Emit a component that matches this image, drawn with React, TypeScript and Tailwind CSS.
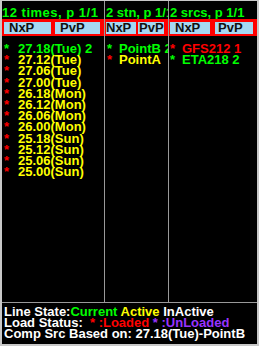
const tone = {
  g: 'text-[#00ff00]',
  y: 'text-[#ffff00]',
  r: 'text-[#ff0000]',
}

type Tone = keyof typeof tone
type Row = { star: Tone; color: Tone; text: string }

const times: Row[] = [
  { star: 'g', color: 'g', text: '27.18(Tue) 2' },
  ...['27.12(Tue)', '27.06(Tue)', '27.00(Tue)', '26.18(Mon)', '26.12(Mon)', '26.06(Mon)', '26.00(Mon)', '25.18(Sun)', '25.12(Sun)', '25.06(Sun)', '25.00(Sun)'].map(
    (text): Row => ({ star: 'r', color: 'y', text })
  ),
]

const stations: Row[] = [
  { star: 'g', color: 'g', text: 'PointB 2' },
  { star: 'r', color: 'y', text: 'PointA' },
]

const sources: Row[] = [
  { star: 'r', color: 'r', text: 'GFS212 1' },
  { star: 'g', color: 'g', text: 'ETA218 2' },
]

function Btn({ label, className }: { label: string; className: string }) {
  return (
    <div className={`h-[12px] bg-[#a6d8f2] text-[#111] leading-[12px] whitespace-nowrap overflow-hidden ${className}`}>
      {label}
    </div>
  )
}

type ColumnProps = {
  title: string
  titleClass: string
  className: string
  bandClass: string
  nxClass: string
  pvClass: string
  starClass: string
  rows: Row[]
}

function Column({ title, titleClass, className, bandClass, nxClass, pvClass, starClass, rows }: ColumnProps) {
  return (
    <div className={`flex flex-col overflow-hidden ${className}`}>
      <div className={`h-[18px] pt-[5px] leading-[13px] whitespace-nowrap text-[#00ff00] ${titleClass}`}>{title}</div>
      <div className={`flex h-[17px] bg-[#ff0000] pt-[3px] ${bandClass}`}>
        <Btn label="NxP" className={nxClass} />
        <Btn label="PvP" className={pvClass} />
      </div>
      <div className="pt-[7px] leading-[11.2px]">
        {rows.map((r) => (
          <div key={r.text} className="flex whitespace-nowrap">
            <span className={`shrink-0 ${starClass} ${tone[r.star]}`}>*</span>
            <span className={tone[r.color]}>{r.text}</span>
          </div>
        ))}
      </div>
    </div>
  )
}

export default function App() {
  return (
    <div className="w-[259px] h-[346px] bg-[#c8c8c8] pt-[1px] px-[2px] pb-[2px] font-['Liberation_Sans',Arial,sans-serif] font-bold text-[13px]">
      <div className="h-full bg-black flex flex-col">
        <div className="flex flex-1 min-h-0">
          <Column
            title="12 times, p 1/1"
            titleClass="tracking-[0.5px]"
            className="w-[103px] border-r border-[#999]"
            bandClass="pl-[2px] gap-[4px]"
            nxClass="w-[47px] pl-[5px]"
            pvClass="w-[45px] pl-[5px]"
            starClass="w-[16px] pl-[2px]"
            rows={times}
          />
          <Column
            title="2 stn, p 1/1"
            titleClass="pl-[1px]"
            className="w-[64px] border-r border-[#999]"
            bandClass="pl-[1px] gap-[2px]"
            nxClass="w-[30px] pl-0"
            pvClass="w-[26px] pl-[1px]"
            starClass="w-[14px] pl-[2px]"
            rows={stations}
          />
          <Column
            title="2 srcs, p 1/1"
            titleClass="pl-[1px]"
            className="flex-1"
            bandClass="pl-[1px] gap-[5px]"
            nxClass="w-[40px] pl-[5px]"
            pvClass="w-[38px] pl-[3px]"
            starClass="w-[13px] pl-[1px]"
            rows={sources}
          />
        </div>
        <div className="h-[42px] shrink-0 border-t border-[#999] pt-[4px] pl-[2px] leading-[10.8px] text-white whitespace-pre">
          <div>
            Line State:<span className="text-[#00ff00]">Current</span> <span className="text-[#ffff00]">Active</span> InActive
          </div>
          <div>
            Load Status:{'  '}
            <span className="text-[#ff0000]">* :Loaded</span> <span className="text-[#9933ff]">* :UnLoaded</span>
          </div>
          <div>Comp Src Based on: 27.18(Tue)-PointB</div>
        </div>
      </div>
    </div>
  )
}
